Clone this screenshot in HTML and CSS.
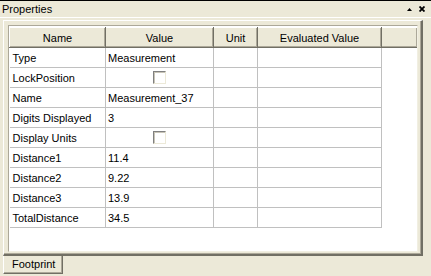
FILE: index.html
```html
<!DOCTYPE html>
<html lang="en">
<head>
    <meta charset="UTF-8">
    <title>Properties</title>
    <link rel="stylesheet" href="styles.css">
</head>
<body>
    <div class="titlebar">
        <span class="title">Properties</span>
        <span class="buttons">
            <svg width="5" height="3" viewBox="0 0 5 3"><path d="M2.5 0 L5 3 L0 3 Z" fill="#000"/></svg>
            <svg width="6" height="6" viewBox="0 0 6 6"><path d="M0.5 0.5 L5.5 5.5 M5.5 0.5 L0.5 5.5" stroke="#000" stroke-width="1.8"/></svg>
        </span>
    </div>

    <div class="frame">
        <div class="client">
            <table class="grid">
                <tr>
                    <th class="c-name">Name</th>
                    <th class="c-value">Value</th>
                    <th class="c-unit">Unit</th>
                    <th class="c-eval">Evaluated Value</th>
                    <th class="c-rest"></th>
                </tr>
                <tr><td>Type</td><td>Measurement</td><td></td><td></td><td class="c-rest"></td></tr>
                <tr><td>LockPosition</td><td class="check"><span class="box"></span></td><td></td><td></td><td class="c-rest"></td></tr>
                <tr><td>Name</td><td>Measurement_37</td><td></td><td></td><td class="c-rest"></td></tr>
                <tr><td>Digits Displayed</td><td>3</td><td></td><td></td><td class="c-rest"></td></tr>
                <tr><td>Display Units</td><td class="check"><span class="box"></span></td><td></td><td></td><td class="c-rest"></td></tr>
                <tr><td>Distance1</td><td>11.4</td><td></td><td></td><td class="c-rest"></td></tr>
                <tr><td>Distance2</td><td>9.22</td><td></td><td></td><td class="c-rest"></td></tr>
                <tr><td>Distance3</td><td>13.9</td><td></td><td></td><td class="c-rest"></td></tr>
                <tr><td>TotalDistance</td><td>34.5</td><td></td><td></td><td class="c-rest"></td></tr>
            </table>
        </div>
    </div>

    <div class="tabs">
        <div class="tab">Footprint</div>
    </div>
</body>
</html>
```

FILE: styles.css
```css
body {
    margin: 0;
    width: 431px;
    height: 276px;
    overflow: hidden;
    background-color: #ece9d8;
    font-family: "Liberation Sans", Arial, sans-serif;
    font-size: 11px;
    color: #000;
}

.titlebar {
    display: flex;
    align-items: center;
    justify-content: space-between;
    height: 16px;
    border-top: 1px solid #000;
    border-bottom: 1px solid #fff;
    padding: 0 6px 0 2px;
}

.buttons {
    display: flex;
    align-items: center;
    gap: 7px;
}

.frame {
    margin: 2px 8px 0 3px;
    border-top: 1px solid #fff;
    border-left: 1px solid #fff;
    border-right: 2px solid #716f64;
    border-bottom: 2px solid #716f64;
    box-shadow: inset -1px -1px 0 #aca899;
    padding: 4px 3px 2px 4px;
}

.client {
    height: 224px;
    background-color: #fff;
    border-top: 1px solid #aca899;
    border-left: 1px solid #aca899;
    border-right: 1px solid #f1efe2;
    border-bottom: 1px solid #f1efe2;
    padding: 1px 0 0 0;
    overflow: hidden;
}

.grid {
    border-collapse: collapse;
    table-layout: fixed;
    width: 408px;
}

.grid th {
    height: 20px;
    padding: 0;
    box-sizing: border-box;
    background-color: #ece9d8;
    font-weight: normal;
    text-align: center;
    border-top: 1px solid #fff;
    border-left: 1px solid #fff;
    border-right: 1px solid #716f64;
    border-bottom: 1px solid #716f64;
    box-shadow: inset -1px -1px 0 #aca899;
}

.grid td {
    height: 19px;
    padding: 0 0 0 2px;
    border-right: 1px solid #c0c0c0;
    border-bottom: 1px solid #c0c0c0;
    white-space: nowrap;
}

.grid td:first-child {
    padding-left: 3px;
}

.grid td.c-rest {
    border: none;
}

.c-name { width: 96px; }
.c-value { width: 108px; }
.c-unit { width: 44px; }
.c-eval { width: 124px; }
.c-rest { width: 36px; }

.grid td.check {
    text-align: center;
    padding: 0;
}

.box {
    display: inline-block;
    vertical-align: middle;
    width: 11px;
    height: 11px;
    background-color: #fff;
    border-top: 1px solid #808080;
    border-left: 1px solid #808080;
    border-right: 1px solid #ece9d8;
    border-bottom: 1px solid #ece9d8;
    box-shadow: inset 1px 1px 0 #c8c5b8;
}

.tabs {
    display: flex;
    padding-left: 3px;
}

.tab {
    height: 17px;
    line-height: 17px;
    padding: 0 7px 0 8px;
    border-left: 1px solid #fff;
    border-right: 1px solid #716f64;
    border-bottom: 1px solid #716f64;
    box-shadow: inset -1px -1px 0 #aca899;
}
```
